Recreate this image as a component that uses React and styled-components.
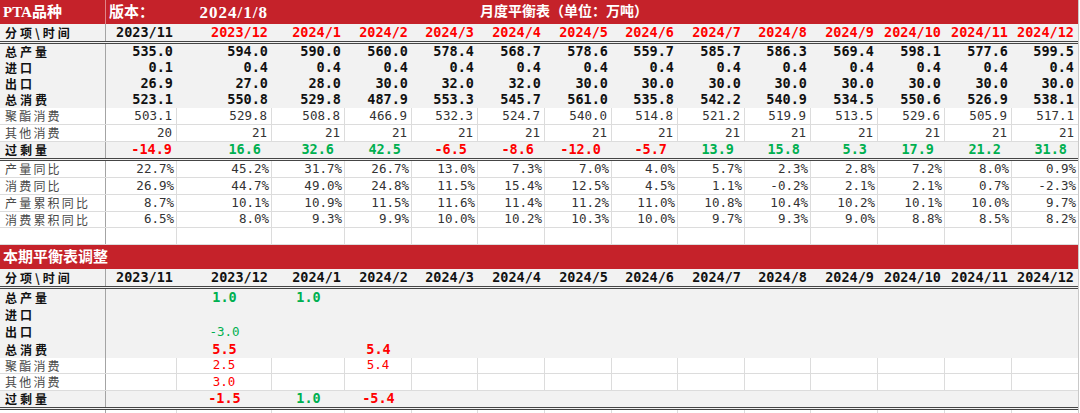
import React from "react";
import styled, { createGlobalStyle } from "styled-components";

const COLS =
  "106px 71px 95px 73px 67px 66px 67px 67px 66px 67px 66px 67px 67px 67px 66px";
const RED = "#c5222a";
const GREEN = "#00b050";
const HOT = "#ff0000";

const months = [
  "2023/11", "2023/12", "2024/1", "2024/2", "2024/3", "2024/4", "2024/5",
  "2024/6", "2024/7", "2024/8", "2024/9", "2024/10", "2024/11", "2024/12",
];

const balance = [
  { label: "总产量", bold: true, h: 16, values: ["535.0", "594.0", "590.0", "560.0", "578.4", "568.7", "578.6", "559.7", "585.7", "586.3", "569.4", "598.1", "577.6", "599.5"] },
  { label: "进口", bold: true, h: 16, values: ["0.1", "0.4", "0.4", "0.4", "0.4", "0.4", "0.4", "0.4", "0.4", "0.4", "0.4", "0.4", "0.4", "0.4"] },
  { label: "出口", bold: true, h: 16, values: ["26.9", "27.0", "28.0", "30.0", "32.0", "32.0", "30.0", "30.0", "30.0", "30.0", "30.0", "30.0", "30.0", "30.0"] },
  { label: "总消费", bold: true, h: 16, values: ["523.1", "550.8", "529.8", "487.9", "553.3", "545.7", "561.0", "535.8", "542.2", "540.9", "534.5", "550.6", "526.9", "538.1"] },
  { label: "聚酯消费", h: 17, values: ["503.1", "529.8", "508.8", "466.9", "532.3", "524.7", "540.0", "514.8", "521.2", "519.9", "513.5", "529.6", "505.9", "517.1"] },
  { label: "其他消费", h: 17, values: ["20", "21", "21", "21", "21", "21", "21", "21", "21", "21", "21", "21", "21", "21"] },
];

const surplus = ["-14.9", "16.6", "32.6", "42.5", "-6.5", "-8.6", "-12.0", "-5.7", "13.9", "15.8", "5.3", "17.9", "21.2", "31.8"];

const ratios = [
  { label: "产量同比", h: 17, values: ["22.7%", "45.2%", "31.7%", "26.7%", "13.0%", "7.3%", "7.0%", "4.0%", "5.7%", "2.3%", "2.8%", "7.2%", "8.0%", "0.9%"] },
  { label: "消费同比", h: 17, values: ["26.9%", "44.7%", "49.0%", "24.8%", "11.5%", "15.4%", "12.5%", "4.5%", "1.1%", "-0.2%", "2.1%", "2.1%", "0.7%", "-2.3%"] },
  { label: "产量累积同比", h: 17, values: ["8.7%", "10.1%", "10.9%", "11.5%", "11.6%", "11.4%", "11.2%", "11.0%", "10.8%", "10.4%", "10.2%", "10.1%", "10.0%", "9.7%"] },
  { label: "消费累积同比", h: 16, values: ["6.5%", "8.0%", "9.3%", "9.9%", "10.0%", "10.2%", "10.3%", "10.0%", "9.7%", "9.3%", "9.0%", "8.8%", "8.5%", "8.2%"] },
];

// adjustments: { column index: [value, colour, bold] }
const adjustments = [
  { label: "总产量", tone: "grey", bold: true, h: 17, cells: { 1: ["1.0", GREEN, true], 2: ["1.0", GREEN, true] } },
  { label: "进口", tone: "grey", bold: true, h: 17, cells: {} },
  { label: "出口", tone: "grey", bold: true, h: 18, cells: { 1: ["-3.0", GREEN, false] } },
  { label: "总消费", tone: "grey", bold: true, h: 17, cells: { 1: ["5.5", HOT, true], 3: ["5.4", HOT, true] } },
  { label: "聚酯消费", tone: "white", h: 16, cells: { 1: ["2.5", HOT, false], 3: ["5.4", HOT, false] } },
  { label: "其他消费", tone: "white", h: 17, cells: { 1: ["3.0", HOT, false] } },
  { label: "过剩量", tone: "grey", bold: true, h: 19, double: true, cells: { 1: ["-1.5", HOT, true], 2: ["1.0", GREEN, true], 3: ["-5.4", HOT, true] } },
];

const GlobalStyle = createGlobalStyle`
  * { box-sizing: border-box; }
  body { margin: 0; background: #ffffff; }
`;

const Sheet = styled.div`
  width: 1079px;
  border-right: 1px solid #c9c9c9;
  font-family: "Noto Sans CJK SC", sans-serif;
`;

const Row = styled.div`
  display: grid;
  grid-template-columns: ${COLS};
  height: ${(p) => p.$h}px;
  background: ${(p) =>
    p.$tone === "red" ? RED : p.$tone === "white" ? "#ffffff" : "#f2f2f2"};
  border-bottom: ${(p) =>
    p.$double
      ? "3px double #454545"
      : p.$tone === "white"
      ? "1px solid #dcdcdc"
      : "none"};

  & > * {
    border-right: ${(p) => (p.$tone === "white" ? "1px solid #dcdcdc" : "none")};
  }
  & > *:first-child {
    border-right: 1px solid
      ${(p) => (p.$tone === "red" ? "rgba(255,255,255,0.45)" : "#a4a4a4")};
  }
  & > *:last-child {
    border-right: none;
  }
`;

const Title = styled.div`
  display: flex;
  align-items: center;
  justify-content: ${(p) => (p.$right ? "flex-end" : "flex-start")};
  padding: 0 ${(p) => (p.$right ? 4 : 0)}px 0 ${(p) => p.$left ?? 3}px;
  grid-column: ${(p) => p.$span || "auto"};
  font-family: "Liberation Serif", "Noto Sans CJK SC", serif;
  font-size: ${(p) => p.$size || 15}px;
  line-height: 1;
  font-weight: 700;
  letter-spacing: ${(p) => p.$track || 0}px;
  color: #ffffff;
  white-space: nowrap;
`;

const Label = styled.div`
  display: flex;
  align-items: center;
  padding-left: 5px;
  font-family: "Noto Sans CJK SC", sans-serif;
  font-size: 12px;
  line-height: 1;
  letter-spacing: ${(p) => (p.$bold ? 3 : 2.2)}px;
  font-weight: ${(p) => (p.$bold ? 700 : 400)};
  color: ${(p) => (p.$bold ? "#111111" : "#4a4a4a")};
  white-space: nowrap;
`;

const Num = styled.div`
  display: flex;
  align-items: center;
  justify-content: ${(p) => (p.$center ? "center" : "flex-end")};
  padding-right: ${(p) => (p.$center ? 0 : p.$pad ?? 4)}px;
  font-family: "DejaVu Sans Mono", monospace;
  font-size: ${(p) => (p.$bold ? 13.5 : 12.5)}px;
  line-height: 1;
  font-weight: ${(p) => (p.$bold ? 700 : 400)};
  color: ${(p) => p.$color || (p.$bold ? "#111111" : "#333333")};
  white-space: nowrap;
`;

const Empty = styled.div``;

const HeaderRow = ({ redMonths }) => (
  <Row $tone="grey" $h={20} $double>
    <Label $bold>分项\时间</Label>
    {months.map((m, i) => (
      <Num key={m} $bold $color={redMonths && i > 0 ? HOT : "#111111"}>
        {m}
      </Num>
    ))}
  </Row>
);

const DataRow = ({ row, tone, pct }) => (
  <Row $tone={tone} $h={row.h}>
    <Label $bold={row.bold}>{row.label}</Label>
    {row.values.map((v, i) => (
      <Num key={i} $bold={row.bold} $pad={pct ? 2 : 4}>
        {v}
      </Num>
    ))}
  </Row>
);

const BlankRow = ({ h }) => (
  <Row $tone="white" $h={h}>
    <Empty />
    {months.map((m) => (
      <Empty key={m} />
    ))}
  </Row>
);

export default function App() {
  return (
    <>
      <GlobalStyle />
      <Sheet>
        <Row $tone="red" $h={24}>
          <Title>PTA品种</Title>
          <Title $size={15}>版本：</Title>
          <Title $right $size={17} $track={1}>
            2024/1/8
          </Title>
          <Title $span="4 / -1" $left={208} $size={14}>
            月度平衡表（单位：万吨）
          </Title>
        </Row>
        <HeaderRow redMonths />
        {balance.map((row) => (
          <DataRow key={row.label} row={row} tone={row.bold ? "grey" : "white"} />
        ))}
        <Row $tone="grey" $h={19} $double>
          <Label $bold>过剩量</Label>
          {surplus.map((v, i) => (
            <Num
              key={i}
              $bold
              $pad={i === 0 ? 5 : 11}
              $color={v.startsWith("-") ? HOT : GREEN}
            >
              {v}
            </Num>
          ))}
        </Row>
        {ratios.map((row) => (
          <DataRow key={row.label} row={row} tone="white" pct />
        ))}
        <BlankRow h={17} />

        <Row $tone="red" $h={24}>
          <Title $size={15}>本期平衡表调整</Title>
        </Row>
        <HeaderRow />
        {adjustments.map((row) => (
          <Row key={row.label} $tone={row.tone} $h={row.h} $double={row.double}>
            <Label $bold={row.bold}>{row.label}</Label>
            {months.map((m, i) => {
              const cell = row.cells[i];
              return (
                <Num key={m} $center $bold={cell && cell[2]} $color={cell && cell[1]}>
                  {cell ? cell[0] : ""}
                </Num>
              );
            })}
          </Row>
        ))}
        <BlankRow h={6} />
      </Sheet>
    </>
  );
}
